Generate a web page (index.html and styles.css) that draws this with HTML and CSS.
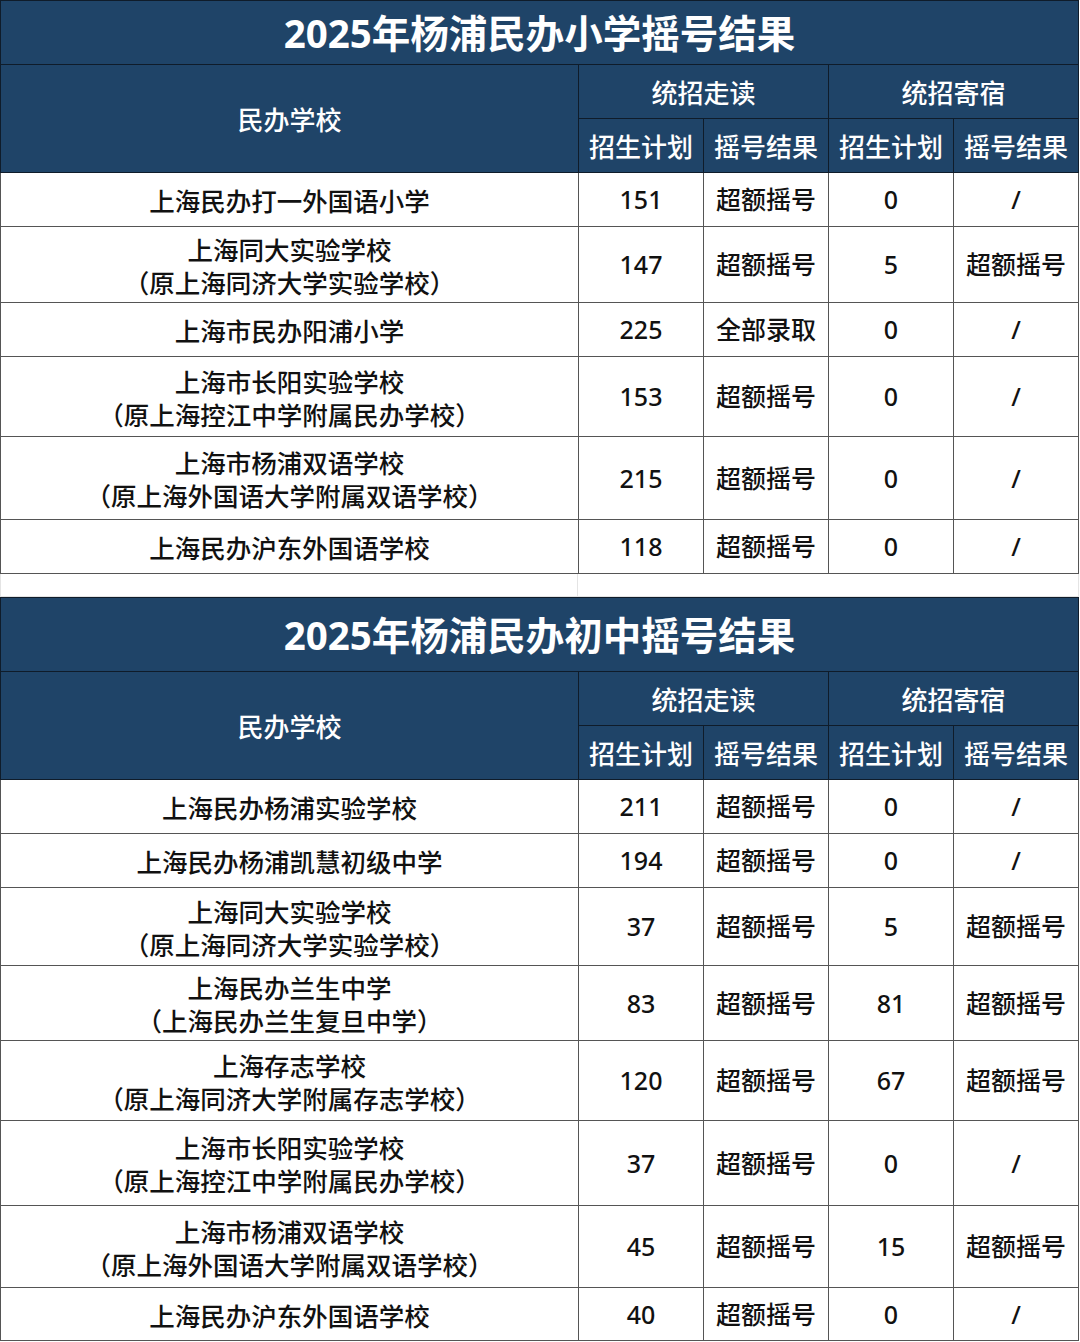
FILE: index.html
```html
<!DOCTYPE html>
<html lang="zh-CN">
<head>
<meta charset="utf-8">
<title>2025年杨浦民办摇号结果</title>
<link rel="stylesheet" href="styles.css">
</head>
<body>
<table class="sheet">
  <colgroup><col class="c-name"><col class="c-n"><col class="c-n"><col class="c-n"><col class="c-n"></colgroup>
  <thead>
    <tr class="h-title"><th colspan="5" class="title">2025年杨浦民办小学摇号结果</th></tr>
    <tr class="h-row"><th rowspan="2">民办学校</th><th colspan="2">统招走读</th><th colspan="2">统招寄宿</th></tr>
    <tr class="h-row"><th>招生计划</th><th>摇号结果</th><th>招生计划</th><th>摇号结果</th></tr>
  </thead>
  <tbody>
    <tr class="r54"><td>上海民办打一外国语小学</td><td>151</td><td>超额摇号</td><td>0</td><td>/</td></tr>
    <tr class="r76"><td><div>上海同大实验学校</div><div>（原上海同济大学实验学校）</div></td><td>147</td><td>超额摇号</td><td>5</td><td>超额摇号</td></tr>
    <tr class="r54"><td>上海市民办阳浦小学</td><td>225</td><td>全部录取</td><td>0</td><td>/</td></tr>
    <tr class="r80"><td><div>上海市长阳实验学校</div><div>（原上海控江中学附属民办学校）</div></td><td>153</td><td>超额摇号</td><td>0</td><td>/</td></tr>
    <tr class="r83"><td><div>上海市杨浦双语学校</div><div>（原上海外国语大学附属双语学校）</div></td><td>215</td><td>超额摇号</td><td>0</td><td>/</td></tr>
    <tr class="r54"><td>上海民办沪东外国语学校</td><td>118</td><td>超额摇号</td><td>0</td><td>/</td></tr>
  </tbody>
</table>
<div class="gap"><div class="gap-a"></div><div class="gap-b"></div></div>
<table class="sheet">
  <colgroup><col class="c-name"><col class="c-n"><col class="c-n"><col class="c-n"><col class="c-n"></colgroup>
  <thead>
    <tr class="h-title2"><th colspan="5" class="title">2025年杨浦民办初中摇号结果</th></tr>
    <tr class="h-row"><th rowspan="2">民办学校</th><th colspan="2">统招走读</th><th colspan="2">统招寄宿</th></tr>
    <tr class="h-row"><th>招生计划</th><th>摇号结果</th><th>招生计划</th><th>摇号结果</th></tr>
  </thead>
  <tbody>
    <tr class="r54"><td>上海民办杨浦实验学校</td><td>211</td><td>超额摇号</td><td>0</td><td>/</td></tr>
    <tr class="r54"><td>上海民办杨浦凯慧初级中学</td><td>194</td><td>超额摇号</td><td>0</td><td>/</td></tr>
    <tr class="r78"><td><div>上海同大实验学校</div><div>（原上海同济大学实验学校）</div></td><td>37</td><td>超额摇号</td><td>5</td><td>超额摇号</td></tr>
    <tr class="r75"><td><div>上海民办兰生中学</div><div>（上海民办兰生复旦中学）</div></td><td>83</td><td>超额摇号</td><td>81</td><td>超额摇号</td></tr>
    <tr class="r80"><td><div>上海存志学校</div><div>（原上海同济大学附属存志学校）</div></td><td>120</td><td>超额摇号</td><td>67</td><td>超额摇号</td></tr>
    <tr class="r85"><td><div>上海市长阳实验学校</div><div>（原上海控江中学附属民办学校）</div></td><td>37</td><td>超额摇号</td><td>0</td><td>/</td></tr>
    <tr class="r82"><td><div>上海市杨浦双语学校</div><div>（原上海外国语大学附属双语学校）</div></td><td>45</td><td>超额摇号</td><td>15</td><td>超额摇号</td></tr>
    <tr class="r53"><td>上海民办沪东外国语学校</td><td>40</td><td>超额摇号</td><td>0</td><td>/</td></tr>
  </tbody>
</table>
</body>
</html>
```
FILE: styles.css
```css
html, body {
  margin: 0;
  padding: 0;
  background: #ffffff;
}
body {
  font-family: "Noto Sans", "Noto Sans CJK SC", sans-serif;
  color: #111111;
}
.sheet {
  border-collapse: collapse;
  table-layout: fixed;
  width: 1079px;
}
.c-name { width: 578px; }
.c-n { width: 125px; }
.sheet th {
  background: #1f4468;
  color: #ffffff;
  font-family: "Noto Sans CJK SC", sans-serif;
  font-weight: 500;
  font-size: 26px;
  border: 1px solid #0f1c2a;
  padding: 0;
  text-align: center;
  line-height: 32px;
}
.sheet th.title {
  font-family: "Noto Sans", "Noto Sans CJK SC", sans-serif;
  font-weight: 700;
  font-size: 38.5px;
  line-height: 46px;
}
.h-title { height: 64px; }
.h-title2 { height: 74px; }
.h-row { height: 54px; }
.sheet td {
  border: 1px solid #555555;
  padding: 0;
  text-align: center;
  vertical-align: middle;
  font-size: 25px;
  font-weight: 500;
  line-height: 33px;
  color: #111111;
}
.sheet td:first-child {
  font-family: "Noto Sans CJK SC", sans-serif;
  font-size: 25.5px;
  font-weight: 500;
}
.r53 { height: 53px; }
.r54 { height: 54px; }
.r75 { height: 75px; }
.r76 { height: 76px; }
.r78 { height: 78px; }
.r80 { height: 80px; }
.r82 { height: 82px; }
.r83 { height: 83px; }
.r85 { height: 85px; }
.gap {
  display: grid;
  grid-template-columns: 578px 501px;
  height: 23px;
}
.gap-a {
  border-left: 1px solid #e4e4e4;
  border-right: 1px solid #e4e4e4;
  border-bottom: 1px solid #e4e4e4;
}
.gap-b {
  border-right: 1px solid #e4e4e4;
  border-bottom: 1px solid #e4e4e4;
}
```
